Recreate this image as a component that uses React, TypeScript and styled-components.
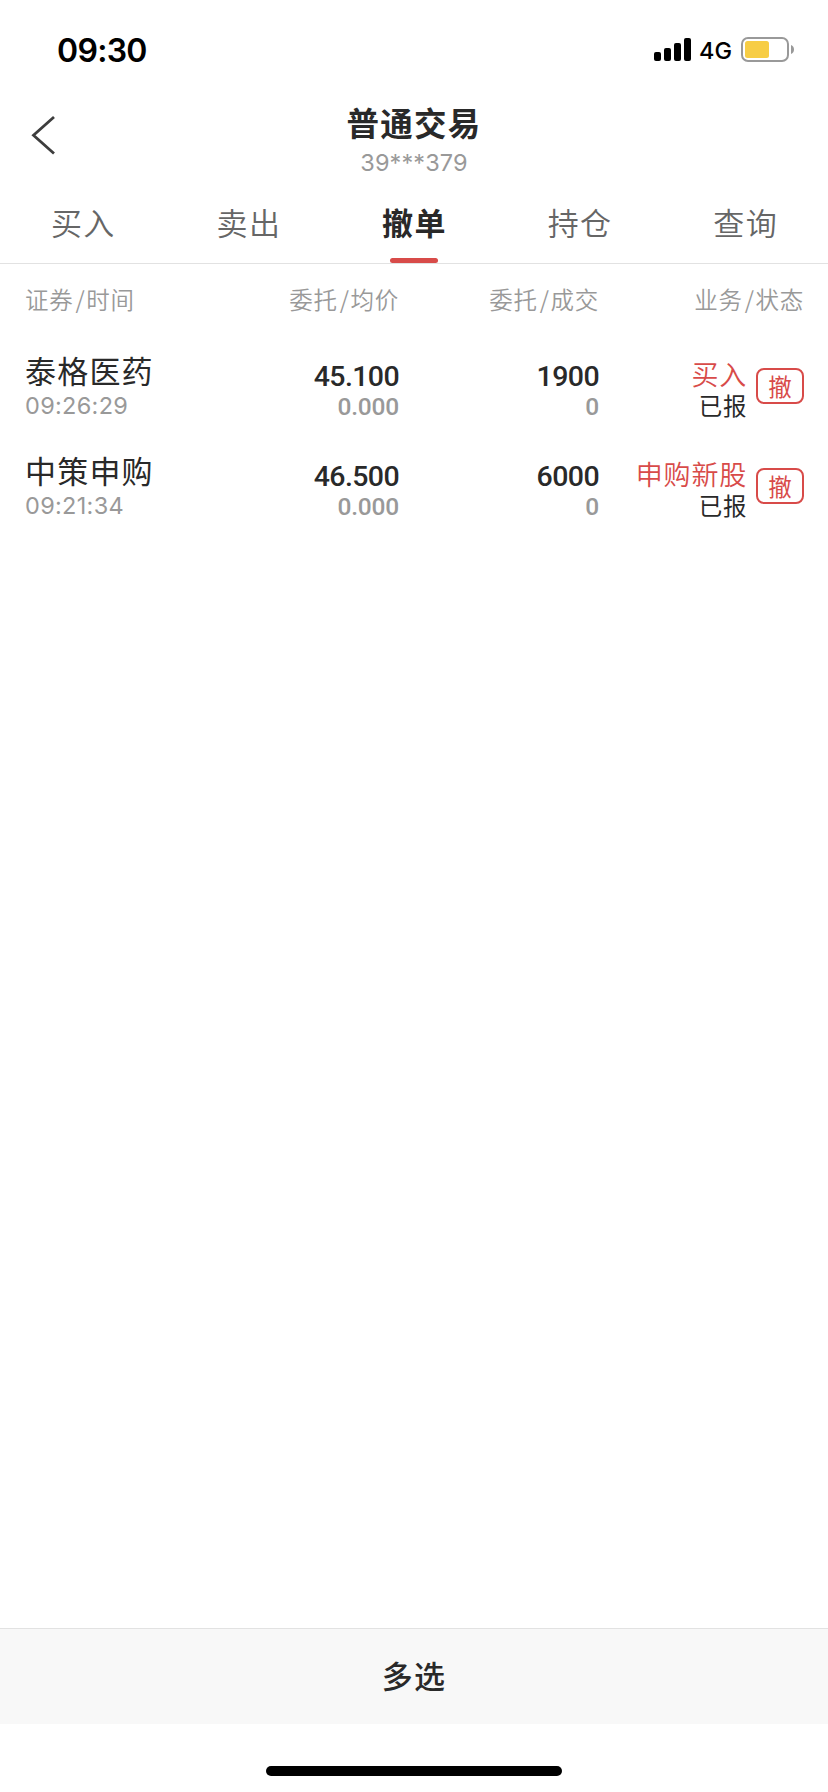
import React from "react";
import styled, { createGlobalStyle } from "styled-components";

const cjk = `"Noto Sans CJK SC", sans-serif`;
const latin = `Inter, "Liberation Sans", sans-serif`;
const numeric = `Roboto, "Liberation Sans", sans-serif`;

const GlobalStyle = createGlobalStyle`
  * { box-sizing: border-box; }
  body { margin: 0; background: #fff; color: #292929; font-family: ${cjk}; }
  button { margin: 0; padding: 0; border: 0; background: none; font: inherit; color: inherit; }
`;

const Screen = styled.div`
  display: flex;
  flex-direction: column;
  width: 828px;
  height: 1792px;
  background: #fff;
`;

const StatusBar = styled.div`
  display: flex;
  justify-content: space-between;
  height: 88px;
  padding: 30px 33px 0 57px;
`;

const Clock = styled.span`
  font: 600 32px/41px ${latin};
  letter-spacing: -0.7px;
  color: #000;
`;

const Indicators = styled.div`
  display: flex;
  height: 40px;
`;

const Network = styled.span`
  width: 42px;
  margin-left: 8px;
  font: 500 23.5px/41px ${latin};
  color: #000;
`;

const NavBar = styled.header`
  display: grid;
  grid-template-columns: 88px 1fr 88px;
  height: 95px;
`;

const BackButton = styled.button`
  display: flex;
  padding: 26px 0 0 30px;
`;

const Heading = styled.div`
  display: flex;
  flex-direction: column;
  align-items: center;
  padding-top: 11px;
`;

const Title = styled.h1`
  margin: 0;
  font-size: 32.5px;
  font-weight: 700;
  line-height: 46px;
  letter-spacing: 1.2px;
`;

const Account = styled.span`
  font: 400 23.5px/36px ${latin};
  letter-spacing: 0.1px;
  color: #999;
`;

const TabBar = styled.nav`
  display: grid;
  grid-template-columns: repeat(5, 1fr);
  height: 81px;
  border-bottom: 1px solid #e2e2e2;
`;

const Tab = styled.button<{ $active?: boolean }>`
  display: flex;
  flex-direction: column;
  align-items: center;
  justify-content: space-between;
  padding-top: 16px;
  font-size: 31px;
  line-height: 46px;
  letter-spacing: 1.4px;
  text-indent: 1px;
  font-weight: ${(p) => (p.$active ? 700 : 350)};
  color: ${(p) => (p.$active ? "#292929" : "#666")};

  &::after {
    content: "";
    width: 48px;
    height: 5px;
    border-radius: 2.5px;
    background: ${(p) => (p.$active ? "#d84b49" : "transparent")};
  }
`;

const Grid = styled.div`
  display: grid;
  grid-template-columns: 200px 174px 200px 1fr;
  padding: 0 24px 0 25px;
`;

const TableHead = styled(Grid)`
  height: 73px;
  padding-top: 15px;
  font-size: 23.5px;
  font-weight: 350;
  line-height: 40px;
  letter-spacing: 0.7px;
  color: #999;
`;

const HeadCell = styled.span<{ $right?: boolean }>`
  text-align: ${(p) => (p.$right ? "right" : "left")};
`;

const Slash = styled.span`
  margin: 0 1px 0 2px;
`;

const Row = styled(Grid)`
  height: 100px;
`;

const Security = styled.div`
  display: flex;
  flex-direction: column;
  padding-top: 10px;
`;

const Name = styled.span`
  font-size: 31px;
  line-height: 46px;
  letter-spacing: 1.2px;
`;

const Time = styled.span`
  font: 400 23.5px/30px ${latin};
  letter-spacing: 0.3px;
  margin-top: -2px;
  color: #999;
`;

const Figures = styled.div`
  display: flex;
  flex-direction: column;
  align-items: flex-end;
  padding-top: 23px;
  font-family: ${numeric};
  font-weight: 500;
`;

const Primary = styled.span`
  font-size: 28.5px;
  line-height: 34px;
  letter-spacing: -0.6px;
`;

const Secondary = styled.span`
  font-size: 24.5px;
  line-height: 28px;
  letter-spacing: -0.2px;
  margin-top: -1px;
  color: #999;
`;

const Action = styled.div`
  display: flex;
  justify-content: flex-end;
  gap: 9px;
`;

const State = styled.div`
  display: flex;
  flex-direction: column;
  align-items: flex-end;
  padding-top: 20px;
`;

const Business = styled.span`
  font-size: 27px;
  font-weight: 350;
  line-height: 34px;
  letter-spacing: 0.8px;
  color: #d84b49;
`;

const Status = styled.span`
  margin-top: -1px;
  font-size: 23.5px;
  line-height: 30px;
  letter-spacing: 0.6px;
`;

const CancelButton = styled.button`
  width: 48px;
  height: 36px;
  margin-top: 31px;
  border: 2px solid #d84b49;
  border-radius: 8px;
  font-size: 23.5px;
  line-height: 30px;
  color: #d84b49;
`;

const MultiSelect = styled.button`
  height: 96px;
  margin-top: auto;
  padding-bottom: 4px;
  border-top: 1px solid #e2e2e2;
  background: #f8f8f8;
  font-size: 31px;
  font-weight: 500;
  line-height: 46px;
  letter-spacing: 1.2px;
`;

const HomeArea = styled.div`
  display: flex;
  justify-content: center;
  height: 68px;
  padding-top: 42px;
`;

const HomeIndicator = styled.div`
  width: 296px;
  height: 10px;
  border-radius: 5px;
  background: #000;
`;

const tabs = ["买入", "卖出", "撤单", "持仓", "查询"];

const columns = [
  ["证券", "时间"],
  ["委托", "均价"],
  ["委托", "成交"],
  ["业务", "状态"],
];

const orders = [
  { name: "泰格医药", time: "09:26:29", price: "45.100", average: "0.000", amount: "1900", filled: "0", business: "买入", status: "已报" },
  { name: "中策申购", time: "09:21:34", price: "46.500", average: "0.000", amount: "6000", filled: "0", business: "申购新股", status: "已报" },
];

const SignalIcon = () => (
  <svg width="37" height="40" viewBox="0 0 37 40" fill="#000">
    <rect x="0" y="22" width="7" height="9" rx="2" />
    <rect x="10" y="18" width="7" height="13" rx="2" />
    <rect x="20" y="13" width="7" height="18" rx="2" />
    <rect x="30" y="8" width="7" height="23" rx="2" />
  </svg>
);

const BatteryIcon = () => (
  <svg width="54" height="40" viewBox="0 0 54 40">
    <rect x="1" y="8" width="46" height="23" rx="6" fill="none" stroke="#999" strokeWidth="2" />
    <rect x="4" y="11" width="24" height="17" rx="2.5" fill="#f7cd45" />
    <path d="M50 15c2 .7 3 2.400 3 4.500s-1 3.800-3 4.500z" fill="#999" />
  </svg>
);

export default function App() {
  return (
    <Screen>
      <GlobalStyle />
      <StatusBar>
        <Clock>09:30</Clock>
        <Indicators>
          <SignalIcon />
          <Network>4G</Network>
          <BatteryIcon />
        </Indicators>
      </StatusBar>
      <NavBar>
        <BackButton aria-label="返回">
          <svg width="28" height="42" viewBox="0 0 28 42" fill="none" stroke="#3d3d3d" strokeWidth="2.8">
            <path d="M24 3L3.500 21.300L24 39.500" />
          </svg>
        </BackButton>
        <Heading>
          <Title>普通交易</Title>
          <Account>39***379</Account>
        </Heading>
      </NavBar>
      <TabBar>
        {tabs.map((label) => (
          <Tab key={label} $active={label === "撤单"}>{label}</Tab>
        ))}
      </TabBar>
      <TableHead>
        {columns.map(([first, second], i) => (
          <HeadCell key={first + second} $right={i > 0}>
            {first}<Slash>/</Slash>{second}
          </HeadCell>
        ))}
      </TableHead>
      {orders.map((order) => (
        <Row key={order.name}>
          <Security>
            <Name>{order.name}</Name>
            <Time>{order.time}</Time>
          </Security>
          <Figures>
            <Primary>{order.price}</Primary>
            <Secondary>{order.average}</Secondary>
          </Figures>
          <Figures>
            <Primary>{order.amount}</Primary>
            <Secondary>{order.filled}</Secondary>
          </Figures>
          <Action>
            <State>
              <Business>{order.business}</Business>
              <Status>{order.status}</Status>
            </State>
            <CancelButton>撤</CancelButton>
          </Action>
        </Row>
      ))}
      <MultiSelect>多选</MultiSelect>
      <HomeArea>
        <HomeIndicator />
      </HomeArea>
    </Screen>
  );
}
